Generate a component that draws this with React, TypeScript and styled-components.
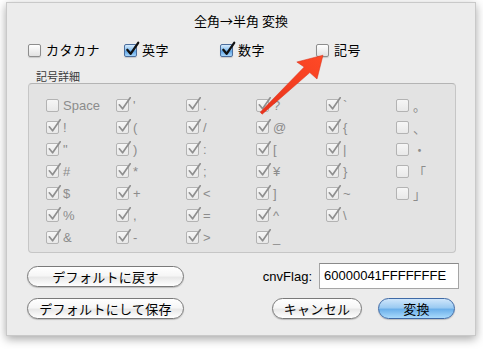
import styled, { createGlobalStyle } from "styled-components";

const GlobalStyle = createGlobalStyle`
  html, body {
    margin: 0;
    padding: 0;
    background: #ffffff;
  }
  body {
    font-family: "Liberation Sans", "Noto Sans CJK JP", sans-serif;
    font-size: 13px;
    color: #000;
  }
`;

const Page = styled.div`
  position: relative;
  width: 483px;
  height: 349px;
  overflow: hidden;
  padding: 2px 0 0 6px;
  box-sizing: border-box;
`;

const Window = styled.div`
  width: 470px;
  height: 334px;
  box-sizing: border-box;
  background: #ececec;
  border: 1px solid #c9c9c9;
  box-shadow: 0 3px 9px rgba(0, 0, 0, 0.35);
  display: flex;
  flex-direction: column;
`;

const Title = styled.div`
  padding-top: 10px;
  height: 16px;
  line-height: 16px;
  text-align: center;
  font-family: "Noto Sans CJK JP", sans-serif;
  font-size: 13px;
`;

const TopRow = styled.div`
  display: grid;
  grid-template-columns: repeat(4, 96px);
  margin: 12px 0 0 21px;
  height: 18px;
  align-items: center;
`;

const Option = styled.label`
  display: flex;
  align-items: center;
  gap: 5px;
  font-family: "Noto Sans CJK JP", sans-serif;
  font-size: 13px;
  line-height: 18px;
  letter-spacing: 0.5px;
`;

const Box = styled.span<{ $checked?: boolean; $disabled?: boolean }>`
  position: relative;
  flex: none;
  width: 13px;
  height: 13px;
  box-sizing: border-box;
  border-radius: 2px;
  border: 1px solid
    ${({ $checked, $disabled }) =>
      $disabled ? "#b3b3b3" : $checked ? "#4b6d9c" : "#8d8d8d"};
  background: ${({ $checked, $disabled }) =>
    $disabled
      ? "linear-gradient(#f6f6f6, #e9e9e9)"
      : $checked
      ? "linear-gradient(#d6ebfd 0%, #8cc2f0 45%, #5ea3e4 55%, #a6d6fb 100%)"
      : "linear-gradient(#ffffff 0%, #f0f0f0 50%, #e2e2e2 100%)"};
  box-shadow: ${({ $disabled }) =>
    $disabled ? "none" : "0 1px 1px rgba(0,0,0,0.15)"};
`;

const Tick = styled.svg<{ $disabled?: boolean }>`
  position: absolute;
  left: 0;
  top: -3px;
  width: 15px;
  height: 15px;
  overflow: visible;
  stroke: ${({ $disabled }) => ($disabled ? "#8f8f8f" : "#111")};
`;

const GroupLabel = styled.div`
  margin: 10px 0 0 29px;
  height: 14px;
  line-height: 14px;
  font-family: "Noto Sans CJK JP", sans-serif;
  font-size: 11px;
  color: #3a3a3a;
`;

const Group = styled.div`
  margin: 0 0 0 21px;
  width: 428px;
  height: 170px;
  box-sizing: border-box;
  background: #e3e3e3;
  border: 1px solid #c6c6c6;
  border-top-color: #b4b4b4;
  border-radius: 4px;
  padding: 10px 0 0 17px;
  display: flex;
`;

const Column = styled.div`
  flex: none;
  width: 70px;
  display: flex;
  flex-direction: column;

  &:last-child {
    width: 40px;
  }
`;

const Cell = styled.div`
  height: 22px;
  display: flex;
  align-items: center;
  gap: 4px;
  color: #8c8c8c;
  font-size: 13px;
  font-family: "Liberation Sans", "Noto Sans CJK JP", sans-serif;
`;

const Footer = styled.div`
  margin: 10px 16px 0 20px;
  display: flex;
  flex-direction: column;
  gap: 9px;
`;

const FooterRow = styled.div<{ $h: number }>`
  height: ${({ $h }) => $h}px;
  display: flex;
  align-items: center;
  justify-content: space-between;
`;

const Right = styled.div<{ $gap?: number; $inset?: number }>`
  display: flex;
  align-items: center;
  gap: ${({ $gap }) => $gap ?? 7}px;
  margin-right: ${({ $inset }) => $inset ?? 0}px;
`;

const Button = styled.button<{ $w: number; $primary?: boolean }>`
  width: ${({ $w }) => $w}px;
  height: 21px;
  padding: 0;
  border-radius: 11px;
  border: 1px solid ${({ $primary }) => ($primary ? "#3f6aa6" : "#7a7a7a")};
  background: ${({ $primary }) =>
    $primary
      ? "linear-gradient(#cfe6fb 0%, #9ccbf2 45%, #6cb0ea 55%, #a9dafc 100%)"
      : "linear-gradient(#ffffff 0%, #f6f6f6 45%, #e8e8e8 55%, #ffffff 100%)"};
  box-shadow: 0 1px 1px rgba(0, 0, 0, 0.2);
  font-family: "Noto Sans CJK JP", sans-serif;
  font-size: 13px;
  line-height: 19px;
  color: #000;
  letter-spacing: 0.3px;
`;

const FlagLabel = styled.span`
  font-size: 13px;
`;

const Field = styled.div`
  width: 140px;
  height: 26px;
  box-sizing: border-box;
  background: #fff;
  border: 1px solid #a5a5a5;
  border-top-color: #8a8a8a;
  padding: 0 4px;
  line-height: 24px;
  font-size: 13px;
`;

const Arrow = styled.svg`
  position: absolute;
  left: 0;
  top: 0;
  width: 483px;
  height: 349px;
  pointer-events: none;
`;

type Item = { label: string; checked: boolean };

const cols: Item[][] = [
  ["Space", "!", '"', "#", "$", "%", "&"].map((l, i) => ({ label: l, checked: i > 0 })),
  ["'", "(", ")", "*", "+", ",", "-"].map((l) => ({ label: l, checked: true })),
  [".", "/", ":", ";", "<", "=", ">"].map((l) => ({ label: l, checked: true })),
  ["?", "@", "[", "¥", "]", "^", "_"].map((l) => ({ label: l, checked: true })),
  ["`", "{", "|", "}", "~", "\\"].map((l) => ({ label: l, checked: true })),
  ["。", "、", "・", "「", "」"].map((l) => ({ label: l, checked: false })),
];

const Check = ({ checked, disabled }: { checked: boolean; disabled?: boolean }) => (
  <Box $checked={checked && !disabled} $disabled={disabled}>
    {checked && (
      <Tick $disabled={disabled} viewBox="0 0 15 15">
        <path
          d="M2.3 7.8 L5.6 11.8 L13.2 0.8"
          fill="none"
          strokeWidth={disabled ? 1.7 : 2.3}
          strokeLinecap="round"
          strokeLinejoin="round"
        />
      </Tick>
    )}
  </Box>
);

const App = () => {
  return (
    <>
      <GlobalStyle />
      <Page>
        <Window>
          <Title>全角→半角 変換</Title>
          <TopRow>
            <Option>
              <Check checked={false} />
              カタカナ
            </Option>
            <Option>
              <Check checked />
              英字
            </Option>
            <Option>
              <Check checked />
              数字
            </Option>
            <Option>
              <Check checked={false} />
              記号
            </Option>
          </TopRow>
          <GroupLabel>記号詳細</GroupLabel>
          <Group>
            {cols.map((col, ci) => (
              <Column key={ci}>
                {col.map((item) => (
                  <Cell key={item.label}>
                    <Check checked={item.checked} disabled />
                    {item.label}
                  </Cell>
                ))}
              </Column>
            ))}
          </Group>
          <Footer>
            <FooterRow $h={26}>
              <Button $w={157}>デフォルトに戻す</Button>
              <Right>
                <FlagLabel>cnvFlag:</FlagLabel>
                <Field>60000041FFFFFFFE</Field>
              </Right>
            </FooterRow>
            <FooterRow $h={21}>
              <Button $w={157}>デフォルトにして保存</Button>
              <Right $gap={16} $inset={4}>
                <Button $w={90}>キャンセル</Button>
                <Button $w={77} $primary>
                  変換
                </Button>
              </Right>
            </FooterRow>
          </Footer>
        </Window>
        <Arrow viewBox="0 0 483 349">
          <defs>
            <linearGradient id="ar" x1="0" y1="1" x2="1" y2="0">
              <stop offset="0" stopColor="#e8321c" />
              <stop offset="1" stopColor="#ff4a26" />
            </linearGradient>
          </defs>
          <polygon
            points="260.2,112.2 304.2,67 296.8,62 323,55.2 317,79 309.8,72.6 262.2,114.2"
            fill="url(#ar)"
            stroke="#d82c16"
            strokeWidth={0.5}
            strokeLinejoin="round"
          />
        </Arrow>
      </Page>
    </>
  );
};

export default App;
